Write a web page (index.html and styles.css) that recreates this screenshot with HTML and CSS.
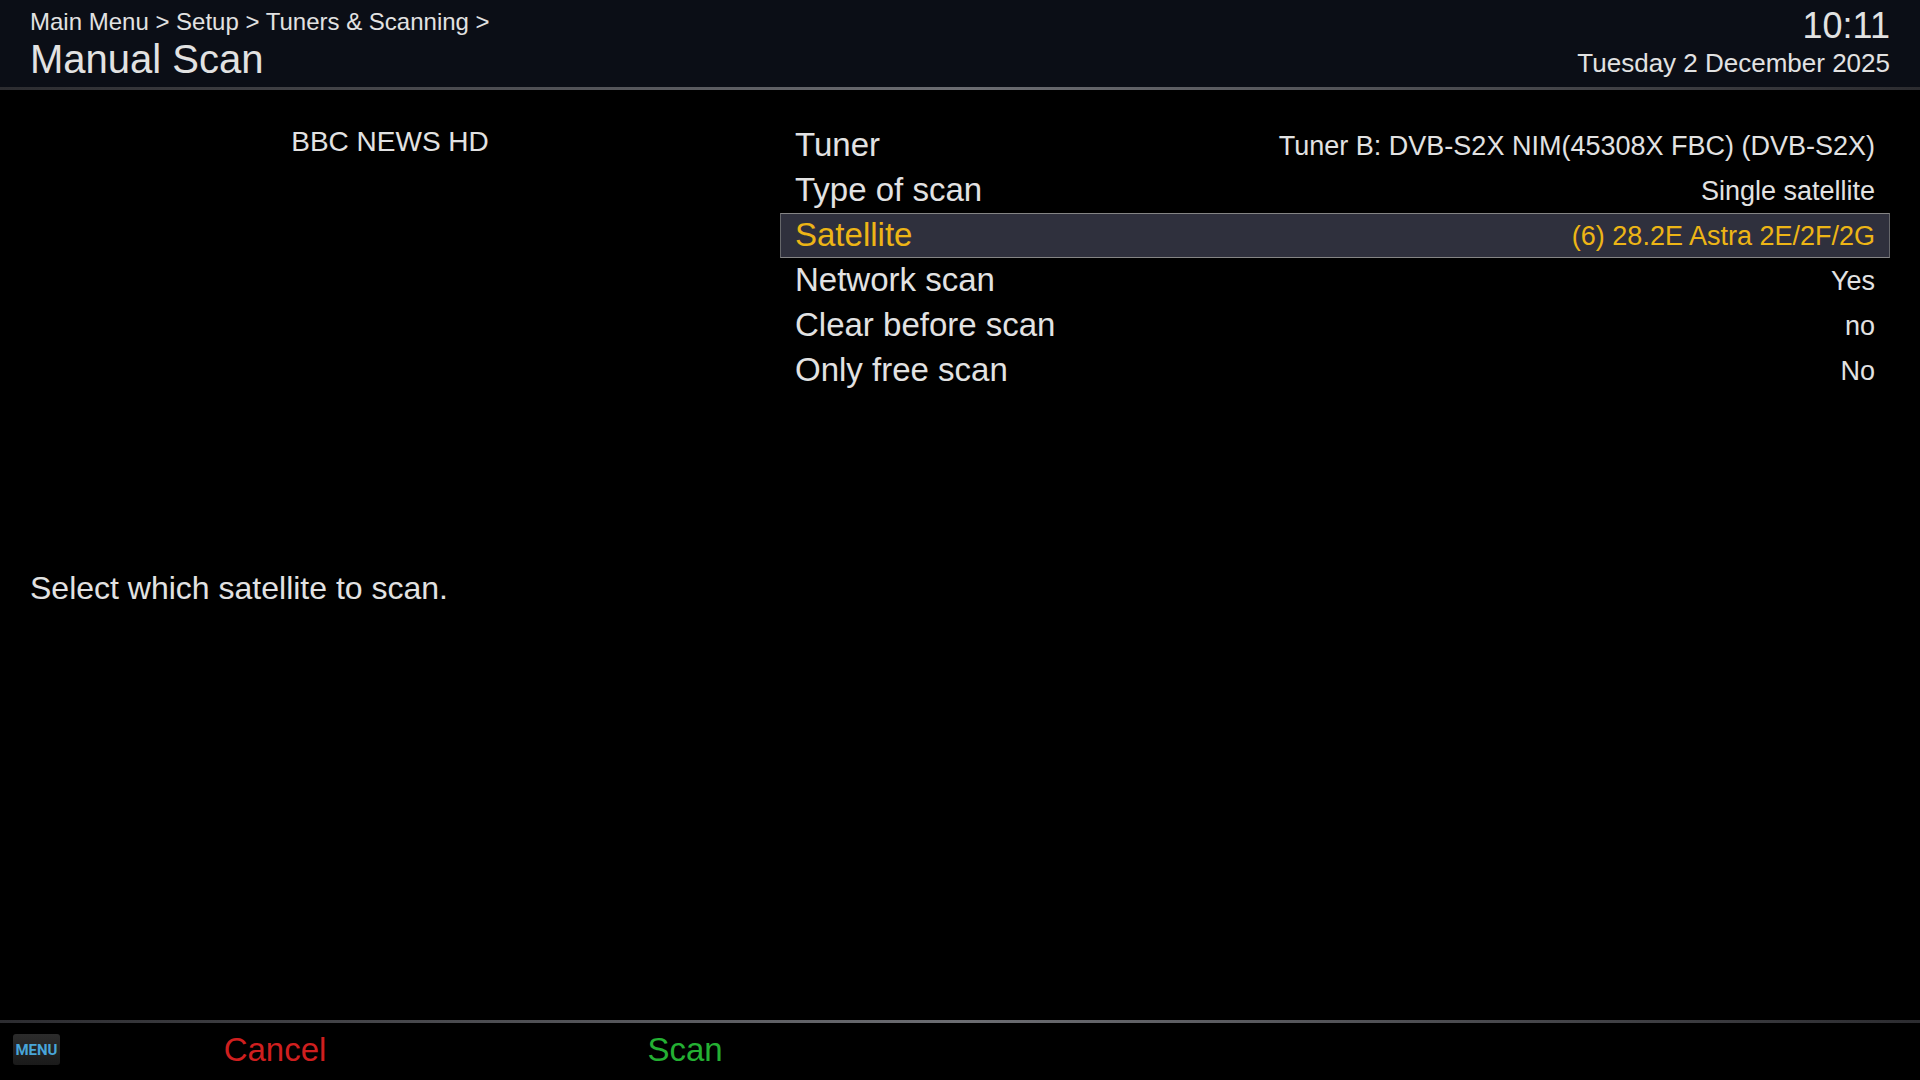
FILE: index.html
```html
<!DOCTYPE html>
<html lang="en">
<head>
  <meta charset="UTF-8">
  <title>Manual Scan</title>
  <link rel="stylesheet" href="styles.css">
</head>
<body>
  <header>
    <div>
      <nav>Main Menu &gt; Setup &gt; Tuners &amp; Scanning &gt;</nav>
      <h1>Manual Scan</h1>
    </div>
    <div class="datetime">
      <div class="clock">10:11</div>
      <div class="date">Tuesday 2 December 2025</div>
    </div>
  </header>
  <div class="line"></div>

  <main>
    <section class="side">
      <div class="channel">BBC NEWS HD</div>
      <p class="help">Select which satellite to scan.</p>
    </section>
    <section class="config">
      <button class="row"><span class="label">Tuner</span><span class="value">Tuner B: DVB-S2X NIM(45308X FBC) (DVB-S2X)</span></button>
      <button class="row"><span class="label">Type of scan</span><span class="value">Single satellite</span></button>
      <button class="row selected"><span class="label">Satellite</span><span class="value">(6) 28.2E Astra 2E/2F/2G</span></button>
      <button class="row"><span class="label">Network scan</span><span class="value">Yes</span></button>
      <button class="row"><span class="label">Clear before scan</span><span class="value">no</span></button>
      <button class="row"><span class="label">Only free scan</span><span class="value">No</span></button>
    </section>
  </main>

  <div class="line"></div>
  <footer>
    <button class="menu">MENU</button>
    <button class="key red">Cancel</button>
    <button class="key green">Scan</button>
  </footer>
</body>
</html>
```
FILE: styles.css
```css
* { box-sizing: border-box; }
body { margin: 0; min-height: 100vh; display: flex; flex-direction: column; background: #000; color: #e2e2e2; font-family: "Liberation Sans", Arial, sans-serif; }
button { margin: 0; padding: 0; border: 0; background: none; color: inherit; font-family: inherit; cursor: pointer; }

header { display: flex; justify-content: space-between; padding: 8px 30px 0; height: 87px; background: #0b0e16; }
nav { font-size: 24px; line-height: 28px; }
h1 { margin: 0; font-size: 40px; line-height: 46px; font-weight: normal; }
.datetime { text-align: right; }
.clock { font-size: 36px; line-height: 36px; }
.date { font-size: 26px; line-height: 38px; }
.line { height: 3px; background: linear-gradient(to right, #2c2c30, #6c6d72 50%, #2c2c30); }

main { flex: 1; display: grid; grid-template-columns: 720fr 1110fr; gap: 30px; padding: 33px 30px; }
.channel { height: 440px; font-size: 28px; line-height: 38px; text-align: center; }
.help { margin: 5px 0 0; font-size: 32px; line-height: 40px; }

.row { display: flex; justify-content: space-between; align-items: center; width: 100%; height: 45px; padding: 0 14px; border: 1px solid transparent; line-height: 40px; }
.label { padding-bottom: 2px; font-size: 33px; }
.value { font-size: 27px; }
.selected { background: #2f303d; border-color: #858585; border-left-color: #66676b; border-right-color: #66676b; color: #edb516; }

footer { display: flex; align-items: center; height: 57px; padding: 0 0 4px 13px; }
.menu { width: 47px; height: 31px; margin-right: 10px; border-radius: 3px; background: linear-gradient(#2c2c2c, #1a1a1a); color: #48a5d9; font: bold 15px Roboto, sans-serif; }
.key { width: 410px; font-size: 33px; line-height: 40px; }
.red { color: #cf1f1f; }
.green { color: #24b033; }
```
